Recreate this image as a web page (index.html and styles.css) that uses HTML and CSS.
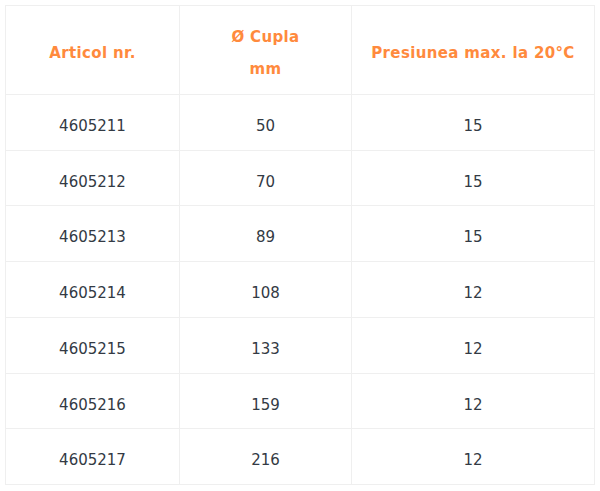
FILE: index.html
```html
<!DOCTYPE html>
<html lang="ro">
<head>
<meta charset="utf-8">
<link rel="stylesheet" href="styles.css">
</head>
<body>
<table class="spec">
  <colgroup>
    <col class="c1">
    <col class="c2">
    <col class="c3">
  </colgroup>
  <thead>
    <tr>
      <th>Articol nr.</th>
      <th>Ø Cupla<br>mm</th>
      <th>Presiunea max. la 20°C</th>
    </tr>
  </thead>
  <tbody>
    <tr><td>4605211</td><td>50</td><td>15</td></tr>
    <tr><td>4605212</td><td>70</td><td>15</td></tr>
    <tr><td>4605213</td><td>89</td><td>15</td></tr>
    <tr><td>4605214</td><td>108</td><td>12</td></tr>
    <tr><td>4605215</td><td>133</td><td>12</td></tr>
    <tr><td>4605216</td><td>159</td><td>12</td></tr>
    <tr><td>4605217</td><td>216</td><td>12</td></tr>
  </tbody>
</table>
</body>
</html>
```
FILE: styles.css
```css
html, body {
  background: #ffffff;
}
body {
  margin: 5px;
  font-family: "DejaVu Sans", Verdana, sans-serif;
  font-size: 15px;
  color: #333a44;
}
.spec {
  width: 589px;
  table-layout: fixed;
  border-collapse: collapse;
}
.c1 { width: 174px; }
.c2 { width: 172px; }
.c3 { width: 243px; }
.spec th,
.spec td {
  border: 1px solid #efefef;
  text-align: center;
  vertical-align: middle;
}
.spec th {
  padding: 15px 4px 9px;
  color: #ff8a3d;
  font-weight: bold;
  line-height: 32px;
  letter-spacing: 0.35px;
}
.spec td {
  padding: 16px 4px 8px;
  line-height: 30.7px;
}
```
